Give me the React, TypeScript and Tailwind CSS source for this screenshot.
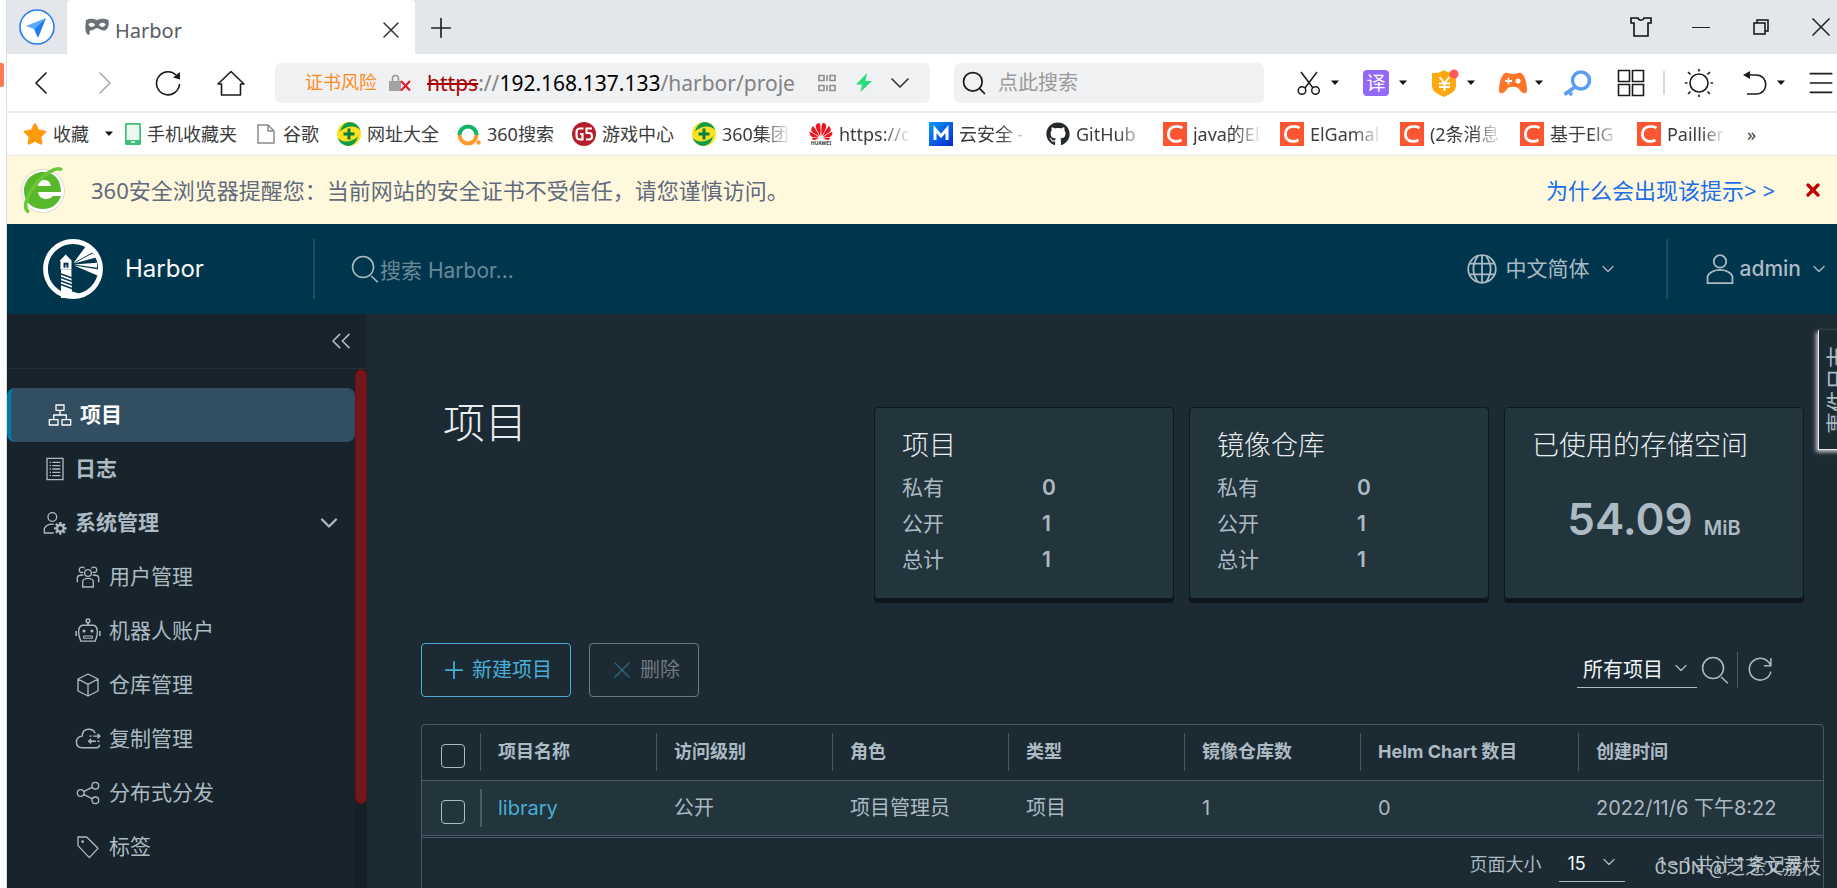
import type { ReactNode } from "react";
import clsx from "clsx";
import { ChevronDown, ChevronLeft, ChevronRight, ChevronsLeft, Menu, Plus, Search, X } from "lucide-react";
import { FaGithub, FaStar } from "react-icons/fa";
import { SiHuawei } from "react-icons/si";

const uiFont = "font-['Noto_Sans','Noto_Sans_CJK_SC',sans-serif]";
const appFont = "font-['Inter','Noto_Sans_CJK_SC',sans-serif]";

type IconProps = { className?: string; children?: ReactNode };

/** Shared outline wrapper, drawn on the 36px Clarity grid */
const Outline = ({ className = "w-6 h-6", children }: IconProps) => (
  <svg
    viewBox="0 0 36 36"
    className={clsx("shrink-0", className)}
    fill="none"
    stroke="currentColor"
    strokeWidth="2"
    strokeLinejoin="round"
    aria-hidden="true"
  >
    {children}
  </svg>
);

const OrgIcon = () => (
  <Outline>
    <rect x="12" y="3" width="12" height="8" />
    <rect x="2" y="25" width="13" height="8" />
    <rect x="21" y="25" width="13" height="8" />
    <path d="M18 11v7M8.500 25v-7h19v7" />
  </Outline>
);

const LogIcon = () => (
  <Outline>
    <rect x="6" y="2" width="24" height="32" />
    <path d="M10 8h2M14 8h12M10 13h2M14 13h12M10 18h2M14 18h12M10 23h2M14 23h12M10 28h2M14 28h12" />
  </Outline>
);

const AdminIcon = () => (
  <Outline>
    <circle cx="14" cy="9" r="6.500" />
    <path d="M16 33H2v-7c3-5 8-7 14-6" />
    <circle cx="26" cy="26" r="5" strokeWidth="3.500" />
    <path d="M26 16.500v4M26 31.500v4M16.500 26h4M31.500 26h4M19.300 19.300l2.800 2.800M29.900 29.900l2.800 2.800M19.300 32.700l2.800-2.800M29.900 22.100l2.800-2.800" strokeWidth="3.500" />
  </Outline>
);

const UsersIcon = () => (
  <Outline>
    <circle cx="18" cy="12" r="5" />
    <path d="M10 33v-8c0-3 4-5 8-5s8 2 8 5v8z" />
    <path d="M11 11c-5 1-7-2-6-5s6-4 8-1M25 11c5 1 7-2 6-5s-6-4-8-1" />
    <path d="M2 26v-7c0-3 3-4 9-4M34 26v-7c0-3-3-4-9-4" />
  </Outline>
);

const RobotIcon = () => (
  <Outline className="size-[26px]">
    <circle cx="18" cy="4" r="2.500" />
    <path d="M18 6.500V10M11 10h14c4 0 6 4 6 10 0 5-2 8-3 12H8c-1-4-3-7-3-12 0-6 2-10 6-10zM1.500 18v7M34.500 18v7" />
    <path d="M12 25h12v3H12z" strokeWidth="1.500" />
    <circle cx="12.500" cy="18" r="1.200" fill="currentColor" />
    <circle cx="23.500" cy="18" r="1.200" fill="currentColor" />
  </Outline>
);

const BoxIcon = () => (
  <Outline>
    <path d="M18 1.500L33 9v18l-15 7.500L3 27V9zM3 9l15 8 15-8M18 17v17" />
  </Outline>
);

const CloudIcon = () => (
  <Outline className="size-[26px]">
    <path d="M28 10c-2-4-6-6-10-5.500-5 .5-8 4.500-8 9.500-5 0-8 4-8 8 0 5 3 8 8 8h20c3 0 4-1 4-4" />
    <path d="M20 14h3M25 14h9M31 11l3.500 3-3.500 3M34 21h-3M29 21H19M22.500 18L19 21l3.500 3" />
  </Outline>
);

const ShareIcon = () => (
  <Outline>
    <circle cx="29" cy="7" r="5" />
    <circle cx="7" cy="18" r="5" />
    <circle cx="29" cy="29" r="5" />
    <path d="M11.500 15.800L24.500 9.200M11.500 20.200l13 6.600" />
  </Outline>
);

const TagIcon = () => (
  <Outline>
    <path d="M3 3h13l17 17-13 14L3 16z" />
    <circle cx="10" cy="10" r="1" />
  </Outline>
);

const GlobeIcon = () => (
  <Outline className="w-8 h-8">
    <circle cx="18" cy="18" r="15.500" />
    <path d="M18 2.500v31M4 12h28M4 24h28M13 4c-6 9-6 19 0 28M23 4c6 9 6 19 0 28" />
  </Outline>
);

const UserIcon = () => (
  <Outline className="w-8 h-8">
    <circle cx="18" cy="9.500" r="7" />
    <path d="M4 34v-8c3-5 8-7 14-7s11 2 14 7v8z" />
  </Outline>
);

const SearchIcon = () => (
  <Outline className="w-7 h-7">
    <circle cx="15.500" cy="15.500" r="13.500" />
    <path d="M26 27l8.500 8" />
  </Outline>
);

const HarborLogo = () => (
  <svg viewBox="0 0 60 60" className="size-15 shrink-0" aria-hidden="true">
    <circle cx="30" cy="30" r="27.500" fill="none" stroke="#fff" strokeWidth="4.800" />
    <g fill="#fff">
      <path d="M30.500 24L43 7l8 5.500zM31 24.600l18.500-10.200 3.500 4.200zM31 25.400l23-1.700v5zM31 26.400l25 4.100-1.500 6z" />
      <path d="M22.700 15.500L29 22H16.500zM17.500 22h11v8.500h-11z" />
      <path d="M18 30.500h10.300l.7 22 9 2.500-6 4H18z" />
    </g>
    <path d="M20.500 23.700h5v5h-2v-3h-1v3h-2z" fill="#00364d" />
    <path d="M18 35l11 4M18 38.500l11 4M18 42l11 4M18 45.500l11 4" stroke="#00364d" strokeWidth="1.400" />
  </svg>
);

/* Browser icons */

const Caret = () => (
  <svg viewBox="0 0 8 6" className="w-2 h-1.5 shrink-0" aria-hidden="true">
    <path d="M0 .5h8L4 5z" fill="#111" />
  </svg>
);

const PlusBall = () => (
  <svg viewBox="0 0 24 24" className="size-6">
    <circle cx="12" cy="12" r="12" fill="#ffe11f" />
    <path d="M12 0a12 12 0 0 1 11.500 8.500C19 3 10 3 3 9.500A12 12 0 0 1 12 0zM12 24A12 12 0 0 1 .5 15.500C5 21 14 21 21 14.500A12 12 0 0 1 12 24z" fill="#0f9d48" />
    <path d="M12 6.500v11M6.500 12h11" stroke="#07803a" strokeWidth="3" />
  </svg>
);

const SoIcon = () => (
  <svg viewBox="0 0 24 24" className="size-6" fill="none" strokeWidth="4">
    <path d="M2.500 13a8.500 8.500 0 1 1 17 0" stroke="#12b364" />
    <path d="M2.500 13a8.500 8.500 0 0 0 17 0" stroke="#ff9a2e" />
    <circle cx="21.500" cy="20.500" r="2.200" fill="#ff9a2e" stroke="none" />
  </svg>
);

const GameIcon = () => (
  <svg viewBox="0 0 24 24" className="size-6" fill="none">
    <circle cx="12" cy="12" r="12" fill="#b3202c" />
    <path d="M11.500 6.500H8C5 6.500 4.500 8 4.500 12s.5 5.500 3.500 5.500h2.500V12H8M20 6.500h-5.500V11H17c2.500 0 3 1 3 3.200s-1 3.300-3 3.300h-3" stroke="#fff" strokeWidth="2.200" />
  </svg>
);

const HuaweiIcon = () => (
  <span className="w-6 h-6 flex flex-col items-center">
    <SiHuawei viewBox="0 2 24 20" className="w-6 h-[19px] text-[#f0141e]" />
    <span className="text-[5px] leading-[5px] font-bold text-[#333]">HUAWEI</span>
  </span>
);

const MIcon = () => (
  <svg viewBox="0 0 24 24" className="size-6" fill="none">
    <defs>
      <linearGradient id="m-bg" x1="0" y1="0" x2="1" y2="1">
        <stop offset="0" stopColor="#0a9bff" />
        <stop offset="1" stopColor="#0626c9" />
      </linearGradient>
    </defs>
    <path fill="url(#m-bg)" d="M0 0h24v24H0z" />
    <path d="M6 18V7l6 7 6-7v11" stroke="#fff" strokeWidth="3" />
  </svg>
);

const CsdnIcon = () => (
  <svg viewBox="0 0 24 24" className="size-6" fill="none">
    <path fill="#fc5531" d="M0 0h24v24H0z" />
    <path d="M19.500 6c-5-3-13-2-14 5-1 8 7 10 13 7" stroke="#fff" strokeWidth="2.800" />
  </svg>
);

const PhoneIcon = () => (
  <svg viewBox="0 0 16 22" className="w-4 h-[22px]">
    <rect x=".8" y=".8" width="14.400" height="20.400" rx="1" fill="#eafaf0" stroke="#3cc077" strokeWidth="1.800" />
    <path d="M1 17h14v4H1z" fill="#3cc077" />
    <path d="M6 19h4" stroke="#fff" strokeWidth="1.500" />
  </svg>
);

const DocIcon = () => (
  <svg viewBox="0 0 18 20" className="w-[18px] h-5" fill="none" stroke="#8b8b8b" strokeWidth="1.500">
    <path d="M1 1h10l6 6v12H1zM11 1v6h6" />
  </svg>
);

const MaskIcon = () => (
  <svg viewBox="0 0 24 18" className="w-6 h-[18px] shrink-0" aria-hidden="true">
    <path
      fillRule="evenodd"
      fill="#6c7178"
      d="M1 2c4-2 7-1.500 11 0 4-1.500 7-2 11.500 0 1 6-1 10.500-5 10.500-3 0-4.500-2.500-6.500-2.500s-3 2.500-6 2.500c-1.500 0-2 1-1 3.500l-2 1C0 14 0 11 1 2zM3.500 6.500c1 3 5 3 6.500.5-1-2.500-5.500-3-6.500-.5zM14 7c1.500 2.500 5.500 2.500 6.500-.5-1-2.500-5.500-2-6.500.5z"
    />
  </svg>
);

type Bookmark = { icon: ReactNode; label: string; clip?: string };

const bookmarks: Bookmark[] = [
  { icon: <PlusBall />, label: "网址大全" },
  { icon: <SoIcon />, label: "360搜索" },
  { icon: <GameIcon />, label: "游戏中心" },
  { icon: <PlusBall />, label: "360集团", clip: "w-[69px]" },
  { icon: <HuaweiIcon />, label: "https://c", clip: "w-[72px]" },
  { icon: <MIcon />, label: "云安全 -", clip: "w-[69px]" },
  { icon: <FaGithub className="size-6 text-[#24292f]" />, label: "GitHub", clip: "w-[69px]" },
  { icon: <CsdnIcon />, label: "java的El", clip: "w-[69px]" },
  { icon: <CsdnIcon />, label: "ElGamal", clip: "w-[72px]" },
  { icon: <CsdnIcon />, label: "(2条消息", clip: "w-[72px]" },
  { icon: <CsdnIcon />, label: "基于ElG", clip: "w-[69px]" },
  { icon: <CsdnIcon />, label: "Paillier", clip: "w-[58px]" },
];

const systemLinks = [
  { icon: <UsersIcon />, label: "用户管理" },
  { icon: <RobotIcon />, label: "机器人账户" },
  { icon: <BoxIcon />, label: "仓库管理" },
  { icon: <CloudIcon />, label: "复制管理" },
  { icon: <ShareIcon />, label: "分布式分发" },
  { icon: <TagIcon />, label: "标签" },
];

const TabStrip = () => (
  <div className="flex h-[54px] bg-[#e3e6eb]">
    <button aria-label="主页" className="w-15 flex items-center justify-center">
      <svg viewBox="0 0 36 36" className="size-9">
        <circle cx="18" cy="18" r="17" fill="#fff" stroke="#2a7cf0" strokeWidth="1.600" />
        <path d="M27 9L7 17l8 3z" fill="#5aa9ff" />
        <path d="M27 9l-8 20-4-9z" fill="#1f7af5" />
      </svg>
    </button>
    <div className="w-[348px] bg-white rounded-t-sm flex items-center pl-[18px] pr-2.5">
      <MaskIcon />
      <span className="ml-1.5 mt-2 text-[20px] leading-6 text-[#555c66]">Harbor</span>
      <button aria-label="关闭标签页" className="ml-auto mt-1.5">
        <X className="size-7 text-[#333]" strokeWidth={1.25} />
      </button>
    </div>
    <button aria-label="新标签页" className="ml-2.5 mt-0.5">
      <Plus className="size-8 text-[#222]" strokeWidth={1.25} />
    </button>
    <div className="ml-auto flex items-center gap-7 text-[#111]">
      <button aria-label="皮肤" className="w-8 flex justify-center">
        <svg viewBox="0 0 22 20" className="w-[22px] h-5" fill="none" stroke="currentColor" strokeWidth="1.600">
          <path d="M1 1h7c1 3 5 3 6 0h7v5h-3v13H4V6H1z" />
        </svg>
      </button>
      <button aria-label="最小化" className="w-8 flex justify-center">
        <span className="w-[18px] h-px bg-[#222]" />
      </button>
      <button aria-label="还原" className="w-8 flex justify-center">
        <svg viewBox="0 0 22 20" className="w-[22px] h-5" fill="none" stroke="currentColor" strokeWidth="1.500">
          <path d="M4 6h11v11H4zM7 6V3h11v11h-3" />
        </svg>
      </button>
      <button aria-label="关闭">
        <X className="size-8 text-[#222]" strokeWidth={1.25} />
      </button>
    </div>
  </div>
);

const Toolbar = () => (
  <div className="flex items-center h-[59px] border-b-2 border-[#ececee] bg-white text-[#1c1c1c]">
    <button aria-label="后退" className="ml-4">
      <ChevronLeft className="size-10 -mx-0.5" strokeWidth={1} />
    </button>
    <button aria-label="前进" className="ml-7 text-[#aaa]">
      <ChevronRight className="size-10 -mx-0.5" strokeWidth={1} />
    </button>
    <button aria-label="刷新" className="ml-8">
      <svg viewBox="0 0 26 26" className="size-[26px]" fill="none" stroke="currentColor" strokeWidth="1.600">
        <path d="M24.500 14A11.500 11.500 0 1 1 21 5" />
        <path d="M25 2v7.500l-7-2z" fill="currentColor" stroke="none" />
      </svg>
    </button>
    <button aria-label="主页" className="ml-9">
      <svg viewBox="0 0 28 26" className="w-7 h-[26px]" fill="none" stroke="currentColor" strokeWidth="1.600" strokeLinejoin="round">
        <path d="M1 14L14 1.500 27 14h-3.500v11h-19V14z" />
      </svg>
    </button>
    <div className="ml-[30px] w-[655px] shrink h-10 rounded-md bg-[#eff1f3] flex items-center pl-[30px] pr-[18px]">
      <span className="text-[18px] text-[#ff8a1c] whitespace-nowrap">证书风险</span>
      <svg viewBox="0 0 22 18" className="ml-3 w-[22px] h-[18px] shrink-0" fill="none">
        <path d="M3.500 7V4.500a3 3 0 0 1 6 0V7" stroke="#999" strokeWidth="1.600" />
        <path d="M0 7h12v10H0z" fill="#a3a3a3" />
        <path d="M12 7l9 9.500M21 7l-9 9.500" stroke="#e0202a" strokeWidth="2.200" />
      </svg>
      <div className="ml-4 flex-1 min-w-0 overflow-hidden whitespace-nowrap text-[21px] leading-8 text-[#828282]">
        <span className="text-[#a80000] line-through decoration-2">https</span>://
        <span className="text-black">192.168.137.133</span>/harbor/proje
      </div>
      <svg viewBox="0 0 18 18" className="ml-[22px] size-[18px] shrink-0" fill="none" stroke="#8f8f8f" strokeWidth="1.600">
        <path d="M1 1.500h5v5H1zM12 1.500h5v5h-5zM1 11.500h5v5H1zM12 11.500h5v5h-5zM9 1v6M9 11v6" />
      </svg>
      <svg viewBox="0 0 16 20" className="ml-5 w-4 h-5 shrink-0">
        <path d="M11 0L0 11.500h6L4.500 19 16 8H9.500z" fill="#2bdc7d" />
      </svg>
      <ChevronDown className="ml-3 size-8 -mr-1 shrink-0 text-[#333]" strokeWidth={1.25} />
    </div>
    <label className="ml-6 w-[310px] h-10 rounded-md bg-[#eff1f3] flex items-center pl-1.5 gap-2.5">
      <Search className="size-7 shrink-0" strokeWidth={1.5} />
      <input
        type="text"
        aria-label="搜索"
        placeholder="点此搜索"
        className="w-full bg-transparent text-[20px] placeholder:text-[#9a9a9a] outline-none"
      />
    </label>
    <div className="ml-auto flex items-center">
      <button aria-label="截图" className="flex items-center gap-2.5">
        <svg viewBox="0 0 24 24" className="size-6" fill="none" stroke="currentColor" strokeWidth="1.500">
          <path d="M4 1l12 16M20 1L8 17" />
          <circle cx="5" cy="19.500" r="3.800" />
          <circle cx="18.500" cy="19.500" r="3.800" />
        </svg>
        <Caret />
      </button>
      <button aria-label="翻译" className="ml-6 flex items-center gap-2.5">
        <span className="size-[26px] rounded-sm bg-[#9468f8] text-white text-[19px] leading-[26px]">译</span>
        <Caret />
      </button>
      <button aria-label="优惠" className="ml-6 flex items-center gap-2">
        <svg viewBox="0 0 28 28" className="size-7" fill="none">
          <path d="M13 1c4 3 8 3 12 3v13c0 5-5 8-12 11C6 25 1 22 1 17V4c4 0 8 0 12-3z" fill="#ffa912" />
          <path d="M8.500 8l5 6 5-6M8 14.500h11M8 18h11M13.500 14v8" stroke="#fff" strokeWidth="1.800" />
          <circle cx="23" cy="5" r="4.500" fill="#ff5a5a" />
        </svg>
        <Caret />
      </button>
      <button aria-label="游戏" className="ml-6 flex items-center gap-2">
        <svg viewBox="0 0 28 22" className="w-7 h-[22px]">
          <path d="M6 1c3-1 4 1 8 1s5-2 8-1c4 2 6 11 6 17 0 5-5 4-8-1-2-3-10-3-12 0-3 5-8 6-8 1C0 12 2 3 6 1z" fill="#ff7426" />
          <path d="M9.500 5.500v7M6 9h7" stroke="#fff" strokeWidth="1.800" />
          <circle cx="19" cy="9" r="2.500" fill="#fff" />
        </svg>
        <Caret />
      </button>
      <button aria-label="密码" className="ml-5">
        <svg viewBox="0 0 28 26" className="w-7 h-[26px]" fill="none" stroke="#5a9cf6" strokeWidth="3.500">
          <circle cx="18" cy="10.500" r="8.500" />
          <path d="M12 17L1.500 24.500M5 21l4 4" />
        </svg>
      </button>
      <button aria-label="扩展" className="ml-[26px]">
        <svg viewBox="0 0 28 28" className="size-7" fill="none" stroke="currentColor" strokeWidth="1.600">
          <path d="M1.500 1.500h11v11h-11zM15.500 1.500h11v11h-11zM1.500 15.500h11v11h-11zM15.500 15.500h11v11h-11z" />
        </svg>
      </button>
      <span className="ml-[18px] w-0.5 h-6 bg-[#d8d8d8]" />
      <button aria-label="亮度" className="ml-5">
        <svg viewBox="0 0 28 28" className="size-7" fill="none" stroke="currentColor" strokeWidth="1.600">
          <circle cx="14" cy="14" r="9" />
          <path d="M14 0v2.500M14 25.500V28M0 14h2.500M25.500 14H28M3 3l2.500 2.500M22.500 22.500L25 25M3 25l2.500-2.500M22.500 5.500L25 3" />
        </svg>
      </button>
      <button aria-label="撤销" className="ml-[30px] flex items-center gap-2.5">
        <svg viewBox="0 0 24 26" className="w-6 h-[26px]" fill="none" stroke="currentColor" strokeWidth="1.600">
          <path d="M4 5h9c13 0 13 19 0 19H4" />
          <path d="M7 1v8L0 5z" fill="currentColor" stroke="none" />
        </svg>
        <Caret />
      </button>
      <button aria-label="菜单" className="ml-5">
        <Menu className="size-8" strokeWidth={1.25} />
      </button>
    </div>
  </div>
);

const BookmarkBar = () => (
  <div className="flex items-center h-[43px] pl-4 overflow-hidden whitespace-nowrap border-b border-[#e6e6e6] bg-white text-[18px] text-[#3c3c3c]">
    <FaStar className="size-6 shrink-0 text-[#ff9a0c]" />
    <a href="#favorites" className="ml-1.5 mr-4">收藏</a>
    <Caret />
    <a href="#mobile" className="ml-3 flex items-center gap-1.5">
      <PhoneIcon />
      手机收藏夹
    </a>
    <a href="#google" className="ml-5 flex items-center gap-2">
      <DocIcon />
      谷歌
    </a>
    <div className="ml-[18px] flex items-center gap-[18px]">
      {bookmarks.map((item, index) => (
        <a key={index} href="#bookmark" className="flex items-center gap-1.5 shrink-0">
          {item.icon}
          <span
            className={clsx(
              item.clip,
              item.clip && "overflow-hidden [mask-image:linear-gradient(to_right,#000_60%,transparent)]"
            )}
          >
            {item.label}
          </span>
        </a>
      ))}
      <button aria-label="更多书签" className="ml-1">»</button>
    </div>
  </div>
);

const CertWarning = () => (
  <div className="flex items-center h-[68px] pl-3 pr-3.5 bg-[#fff8dc] text-[22px] text-[#5f6b7c]">
    <svg viewBox="0 0 48 50" className="w-12 h-[50px] shrink-0" fill="none">
      <circle cx="24" cy="26" r="21.500" fill="#fff" stroke="#dcdcc8" />
      <path
        fillRule="evenodd"
        fill="#58b82b"
        d="M24 7c11 0 18 7 18 20H19c1 5 4 7 8 7 3 0 5-1 7-3h8c-3 9-10 13-18 13C12 44 5 36 5 26S13 7 24 7zM19 21h13c-1-4-3-6-7-6s-6 2-6 6z"
      />
      <path d="M10 47C3 44 8 30 17 19S38 1 43 5" stroke="#6cc63a" strokeWidth="3.500" />
    </svg>
    <p className="ml-6">360安全浏览器提醒您：当前网站的安全证书不受信任，请您谨慎访问。</p>
    <a href="#why" className="ml-auto text-[#1a6fea]">为什么会出现该提示&gt; &gt;</a>
    <button aria-label="关闭提示" className="ml-7">
      <X className="size-5 text-[#c00000]" strokeWidth={4} />
    </button>
  </div>
);

const HarborHeader = () => (
  <header className="flex items-center h-[90px] shrink-0 bg-[#00364d] text-[21px] text-[#acbac3]">
    <a href="#home" className="w-[306px] pl-9 flex items-center gap-[22px] text-2xl text-[#fafafa]">
      <HarborLogo />
      Harbor
    </a>
    <label className="flex items-center h-15 pl-9 border-l-2 border-[#1f4c60]">
      <SearchIcon />
      <input
        type="text"
        aria-label="搜索 Harbor"
        placeholder="搜索 Harbor..."
        className="w-96 pt-1 pl-px bg-transparent placeholder:text-[#6a8896] outline-none"
      />
    </label>
    <button className="ml-auto mr-12 flex items-center gap-2">
      <GlobeIcon />
      中文简体
      <ChevronDown className="size-5" strokeWidth={1.5} />
    </button>
    <button className="h-15 pl-9 pr-2 flex items-center gap-1 border-l-2 border-[#1f4c60] font-medium">
      <UserIcon />
      admin
      <ChevronDown className="ml-1 size-5" strokeWidth={1.5} />
    </button>
  </header>
);

const Sidebar = () => (
  <aside className="w-[360px] shrink-0 flex flex-col bg-[#17242b] text-[21px] text-[#acbac3]">
    <div className="flex justify-end items-center h-[55px] pr-2.5 shrink-0 border-b border-[#222f37]">
      <button aria-label="收起">
        <ChevronsLeft className="size-8" strokeWidth={1.25} />
      </button>
    </div>
    <div className="flex flex-1 min-h-0">
      <nav className="flex-1 pt-[19px] overflow-hidden">
        <a
          href="#projects"
          className="flex items-center gap-2 h-[54px] pl-[37px] rounded-lg border-l-4 border-[#0079ad] bg-[#324f62] font-bold text-white"
        >
          <OrgIcon />
          项目
        </a>
        <a href="#logs" className="flex items-center gap-2 h-[54px] pl-9 font-bold">
          <LogIcon />
          日志
        </a>
        <button className="flex items-center gap-2 w-full h-[54px] pl-9 pr-3 font-bold">
          <AdminIcon />
          系统管理
          <ChevronDown className="ml-auto size-7" strokeWidth={2} />
        </button>
        {systemLinks.map((link) => (
          <a key={link.label} href="#system" className="flex items-center h-[54px] pl-[67px]">
            <span className="w-7 mr-[7px] flex justify-center">{link.icon}</span>
            {link.label}
          </a>
        ))}
      </nav>
      {/* Scroll track */}
      <div className="w-3 bg-[#142026]">
        <div className="h-[435px] rounded-md bg-[#75161a] border border-[#611216]" />
      </div>
    </div>
  </aside>
);

const cardStyle = "w-[300px] h-48 px-[27px] pt-5 rounded-sm border border-[#0f181d] bg-[#22343c] shadow-[0_4px_0_#0f171c]";
const cardTitle = "text-[27px] leading-9 text-[#eaedf0] font-light";

const CountCard = ({ title, counts }: { title: string; counts: [string, number][] }) => (
  <section className={cardStyle}>
    <h3 className={cardTitle}>{title}</h3>
    <dl className="mt-1.5 grid grid-cols-[140px_1fr] text-[21px] leading-9">
      {counts.map(([label, value]) => (
        <div key={label} className="contents">
          <dt>{label}</dt>
          <dd className="font-semibold">{value}</dd>
        </div>
      ))}
    </dl>
  </section>
);

const headers = ["项目名称", "访问级别", "角色", "类型", "镜像仓库数", "Helm Chart 数目", "创建时间"];
const rows = [["library", "公开", "项目管理员", "项目", "1", "0", "2022/11/6 下午8:22"]];

const checkboxStyle = "block size-6 appearance-none rounded-sm border border-[#acbac3] checked:bg-[#4aaed9]";

const ProjectTable = () => (
  <div className="mt-[27px] rounded-sm border border-[#495a67]">
    <table className="w-full table-fixed text-left">
      <colgroup>
        <col className="w-[58px]" />
        <col className="w-44" />
        <col className="w-44" />
        <col className="w-44" />
        <col className="w-44" />
        <col className="w-44" />
        <col className="w-[218px]" />
        <col />
      </colgroup>
      <thead>
        <tr className="h-[55px] border-b border-[#495a67] text-[18px]">
          <th className="pl-[19px] pt-2">
            <input type="checkbox" aria-label="全选" className={checkboxStyle} />
          </th>
          {headers.map((name) => (
            <th key={name} className="p-0 font-bold whitespace-nowrap">
              <div className="pl-[17px] leading-[38px] border-l border-[#495a67]">{name}</div>
            </th>
          ))}
        </tr>
      </thead>
      <tbody>
        {rows.map((row) => (
          <tr key={row[0]} className="h-[55px] border-b border-[#495a67] bg-[#22343c] text-[20px]">
            <td className="pl-[19px] pt-2">
              <input type="checkbox" aria-label={row[0]} className={checkboxStyle} />
            </td>
            {row.map((cell, i) => (
              <td key={i} className="p-0 whitespace-nowrap">
                <div className={clsx("pl-4 leading-[38px] border-l-2", i === 0 ? "border-[#495a67]" : "border-transparent")}>
                  {i === 0 ? <a href="#library" className="text-[#4aaed9]">{cell}</a> : cell}
                </div>
              </td>
            ))}
          </tr>
        ))}
      </tbody>
    </table>
    <div className="mt-px flex items-center justify-end h-[54px] pr-5 border-t border-[#495a67] text-[18px]">
      <label htmlFor="page-size">页面大小</label>
      <div className="relative ml-[18px] mr-8">
        <select
          id="page-size"
          className="block w-[66px] h-9 pl-2 appearance-none bg-transparent border-b border-[#acbac3] text-[#f2f5f7]"
        >
          <option>15</option>
        </select>
        <ChevronDown className="absolute right-1.5 top-1.5 size-5 pointer-events-none" strokeWidth={1.5} />
      </div>
      <span>1 - 1 共计 1 条记录</span>
    </div>
  </div>
);

const Projects = () => (
  <main className="relative flex-1 min-w-0 overflow-hidden bg-[#1c2a33] pl-[54px] pr-[13px] text-[#acbac3]">
    <div className="flex items-start justify-between pt-[84px] pl-[22px] pr-5">
      <h2 className="text-[42px] leading-[50px] font-light text-[#eaedf0]">项目</h2>
      <div className="flex gap-[15px] pt-[9px]">
        <CountCard title="项目" counts={[["私有", 0], ["公开", 1], ["总计", 1]]} />
        <CountCard title="镜像仓库" counts={[["私有", 0], ["公开", 1], ["总计", 1]]} />
        <section className={cardStyle}>
          <h3 className={cardTitle}>已使用的存储空间</h3>
          <p className="mt-7 text-center font-semibold text-[44px] leading-[54px]">
            54.09 <span className="text-[20px]">MiB</span>
          </p>
        </section>
      </div>
    </div>

    <div className="mt-11 flex items-center gap-[18px] text-[20px]">
      <button className="h-[54px] px-[18px] flex items-center gap-1 rounded-sm border border-[#4aaed9] text-[#4aaed9]">
        <Plus className="size-7" strokeWidth={1.5} />
        新建项目
      </button>
      <button disabled className="h-[54px] px-[18px] flex items-center gap-1 rounded-sm border border-[#6f7980] text-[#6f7980]">
        <X className="size-7 text-[#2f6379]" strokeWidth={1.25} />
        删除
      </button>
      <div className="ml-auto mr-[50px] flex items-center">
        <div className="relative">
          <select
            aria-label="项目范围"
            className="block w-[120px] h-9 pl-1.5 appearance-none bg-transparent border-b border-[#acbac3] text-[#f2f5f7]"
          >
            <option>所有项目</option>
          </select>
          <ChevronDown className="absolute right-1.5 top-1.5 size-5 pointer-events-none" strokeWidth={1.5} />
        </div>
        <button aria-label="搜索项目" className="ml-1">
          <SearchIcon />
        </button>
        <span className="mx-2 w-px h-9 bg-[#495a67]" />
        <button aria-label="刷新列表">
          <Outline className="w-7 h-7">
            <path d="M32 20A14 14 0 1 1 31 11M32 3v9.500h-9" />
          </Outline>
        </button>
      </div>
    </div>

    <ProjectTable />

    {/* Event log tab docked on the right edge */}
    <button className="absolute top-4 right-[-17px] w-9 h-30 border-l border-b border-[#e8e8e8] shadow-[-2px_2px_4px_#c9c9c9] bg-[#1c2a33]">
      <span className="absolute left-1/2 top-1/2 -translate-1/2 -rotate-90 whitespace-nowrap text-[22px]">
        事件日志
      </span>
    </button>
  </main>
);

export default function App() {
  return (
    <div className={clsx("relative flex h-screen overflow-hidden bg-white", uiFont)}>
      {/* Edge of the window behind the browser */}
      <div className="w-[7px] shrink-0 border-r border-[#dcdcdc] pt-[63px]">
        <div className="w-1 h-6 bg-[#ff7a50] rounded-r-xs" />
      </div>
      <div className="flex-1 min-w-0 flex flex-col">
        <TabStrip />
        <Toolbar />
        <BookmarkBar />
        <CertWarning />
        <div className={clsx("flex-1 min-h-0 flex flex-col", appFont)}>
          <HarborHeader />
          <div className="flex flex-1 min-h-0">
            <Sidebar />
            <Projects />
          </div>
        </div>
      </div>
      <span className="absolute right-4 bottom-2 text-[19px] leading-6 text-[#c9cfd3]/90 font-['Roboto','Noto_Sans_CJK_SC',sans-serif]">
        CSDN @芝芝文荔枝
      </span>
    </div>
  );
}
